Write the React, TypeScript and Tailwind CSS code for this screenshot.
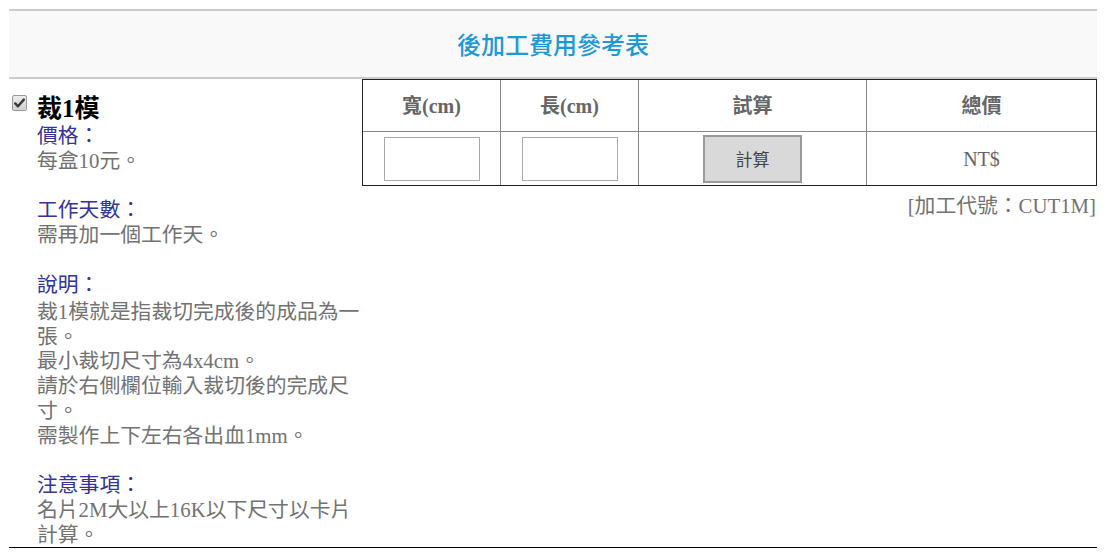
const serif = "font-['Liberation_Serif','Noto_Sans_CJK_TC',serif]"

function Label({ children }: { children: string }) {
  return <div className="text-[#333399]">{children}</div>
}

function Line({ children }: { children: string }) {
  return <div className="text-[#727272]">{children}</div>
}

function Blank() {
  return <div className="h-[24.75px]" />
}

export default function App() {
  return (
    <div className="bg-white min-h-screen pt-[9px] pl-[9px]">
      <div className="w-[1088px]">
        {/* header */}
        <div className="h-[70px] flex items-center justify-center bg-[#f9f9f9] border-y-2 border-[#cccccc]">
          <h2 className="text-[24px] font-medium text-[#1c9ad6] font-['Noto_Sans_CJK_TC',sans-serif]">
            後加工費用參考表
          </h2>
        </div>

        {/* item row */}
        <div className={`flex border-b border-black ${serif}`}>
          <div className="w-[353px] flex">
            <div className="w-[28px] pl-[3px] pt-[16px]">
              <div className="w-[15px] h-[16px] rounded-[2px] border border-[#9a9a9a] bg-gradient-to-b from-[#ececec] to-[#d2d2d2] flex items-center justify-center">
                <svg width="11" height="10" viewBox="0 0 11 10">
                  <path d="M1.2 5.4 L4 8.3 L9.8 1.6" fill="none" stroke="#3a3a3a" strokeWidth="2.4" strokeLinecap="round" strokeLinejoin="round" />
                </svg>
              </div>
            </div>
            <div className="w-[325px] pt-[14px] text-[20.8px] leading-[24.75px]">
              <div className="text-[25px] font-bold text-black leading-[31px]">裁1模</div>
              <Label>價格：</Label>
              <Line>每盒10元。</Line>
              <Blank />
              <Label>工作天數：</Label>
              <Line>需再加一個工作天。</Line>
              <Blank />
              <Label>說明：</Label>
              <div className="mt-[2.5px]">
                <Line>裁1模就是指裁切完成後的成品為一張。</Line>
                <Line>最小裁切尺寸為4x4cm。</Line>
                <Line>請於右側欄位輸入裁切後的完成尺寸。</Line>
                <Line>需製作上下左右各出血1mm。</Line>
              </div>
              <Blank />
              <Label>注意事項：</Label>
              <Line>名片2M大以上16K以下尺寸以卡片計算。</Line>
            </div>
          </div>

          <div className="flex-1">
            <div className="border border-[#222] grid grid-cols-[138px_138px_228px_1fr] text-[#666]">
              <div className="h-[52px] border-r border-b border-[#888] flex items-center justify-center text-[20px] font-bold">寬(cm)</div>
              <div className="h-[52px] border-r border-b border-[#888] flex items-center justify-center text-[20px] font-bold">長(cm)</div>
              <div className="h-[52px] border-r border-b border-[#888] flex items-center justify-center text-[20px] font-bold">試算</div>
              <div className="h-[52px] border-b border-[#888] flex items-center justify-center text-[20px] font-bold">總價</div>

              <div className="h-[53px] border-r border-[#888] flex items-center justify-center">
                <input type="text" className="w-[96px] h-[44px] border border-[#aaa] bg-white outline-none" />
              </div>
              <div className="h-[53px] border-r border-[#888] flex items-center justify-center">
                <input type="text" className="w-[96px] h-[44px] border border-[#aaa] bg-white outline-none" />
              </div>
              <div className="h-[53px] border-r border-[#888] flex items-center justify-center">
                <button className="w-[99px] h-[48px] border-2 border-[#9a9a9a] bg-[#d9d9d9] text-[17px] text-[#444] font-['Noto_Sans_CJK_TC',sans-serif]">
                  計算
                </button>
              </div>
              <div className="h-[53px] flex items-center justify-center text-[20px]">NT$</div>
            </div>
            <div className="mt-[8px] text-right text-[20.8px] leading-[24.75px] text-[#727272] pr-[1px]">
              [加工代號：CUT1M]
            </div>
          </div>
        </div>
      </div>
    </div>
  )
}
